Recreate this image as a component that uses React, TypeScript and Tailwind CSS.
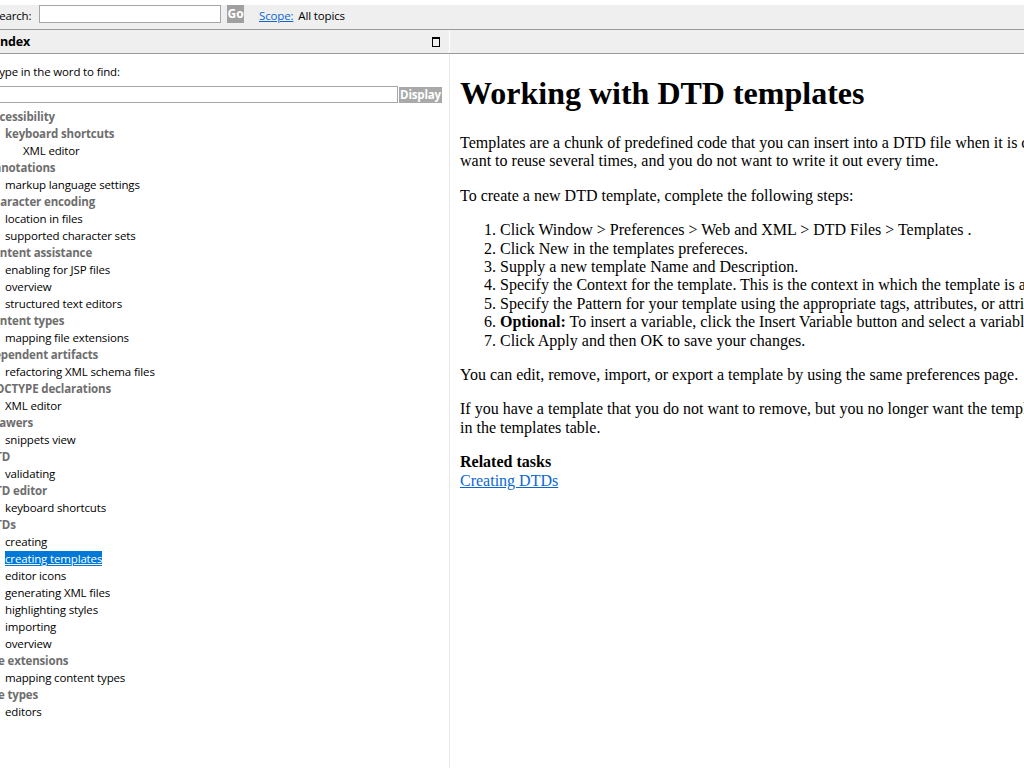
import React from 'react';

type Entry = { label: string; level: 0 | 1 | 2; group?: boolean; selected?: boolean };

// Index entries, top to bottom
const entries: Entry[] = [
  { label: 'accessibility', level: 0, group: true },
  { label: 'keyboard shortcuts', level: 1, group: true },
  { label: 'XML editor', level: 2 },
  { label: 'annotations', level: 0, group: true },
  { label: 'markup language settings', level: 1 },
  { label: 'character encoding', level: 0, group: true },
  { label: 'location in files', level: 1 },
  { label: 'supported character sets', level: 1 },
  { label: 'content assistance', level: 0, group: true },
  { label: 'enabling for JSP files', level: 1 },
  { label: 'overview', level: 1 },
  { label: 'structured text editors', level: 1 },
  { label: 'content types', level: 0, group: true },
  { label: 'mapping file extensions', level: 1 },
  { label: 'dependent artifacts', level: 0, group: true },
  { label: 'refactoring XML schema files', level: 1 },
  { label: 'DOCTYPE declarations', level: 0, group: true },
  { label: 'XML editor', level: 1 },
  { label: 'drawers', level: 0, group: true },
  { label: 'snippets view', level: 1 },
  { label: 'DTD', level: 0, group: true },
  { label: 'validating', level: 1 },
  { label: 'DTD editor', level: 0, group: true },
  { label: 'keyboard shortcuts', level: 1 },
  { label: 'DTDs', level: 0, group: true },
  { label: 'creating', level: 1 },
  { label: 'creating templates', level: 1, selected: true },
  { label: 'editor icons', level: 1 },
  { label: 'generating XML files', level: 1 },
  { label: 'highlighting styles', level: 1 },
  { label: 'importing', level: 1 },
  { label: 'overview', level: 1 },
  { label: 'file extensions', level: 0, group: true },
  { label: 'mapping content types', level: 1 },
  { label: 'file types', level: 0, group: true },
  { label: 'editors', level: 1 },
];

const indent = ['pl-0', 'pl-[18px]', 'pl-[36px]'];

function IndexRow({ e }: { e: Entry }) {
  return (
    <div className={`h-[17px] flex items-center whitespace-nowrap ${indent[e.level]}`}>
      {e.selected ? (
        <span className="bg-[#0078d7] text-white underline leading-[15px]">{e.label}</span>
      ) : (
        <span className={e.group ? 'font-bold text-[#6e6e6e]' : 'text-black'}>{e.label}</span>
      )}
    </div>
  );
}

export default function App() {
  return (
    <div className="w-[1024px] h-[768px] overflow-hidden bg-white flex flex-col font-['Open_Sans',sans-serif] text-[11.5px] tracking-[-0.15px] text-black">
      <div className="h-[5px] shrink-0" />

      {/* Search bar */}
      <div className="h-[25px] shrink-0 bg-[#efefef] border-b border-[#9a9a9a]">
        <div className="h-[18px] flex items-center -ml-[7px]">
          <span className="w-[46px] mt-[4px]">Search:</span>
          <input className="w-[182px] h-[18px] bg-white border border-[#a6a6a6] outline-none" />
          <button className="ml-[6px] w-[17px] h-[18px] bg-[#a0a0a0] text-white font-bold text-[12px] leading-none tracking-normal">Go</button>
          <a href="#" className="ml-[15px] mt-[4px] text-[#0b66d0] underline">Scope:</a>
          <span className="ml-[5px] mt-[4px]">All topics</span>
        </div>
      </div>

      {/* Pane headers */}
      <div className="h-[24px] shrink-0 bg-[#efefef] border-b border-[#9a9a9a] flex">
        <div className="w-[453px] flex items-center justify-between -ml-[4px] pr-[9px]">
          <span className="font-bold text-[12.5px] mt-[1px]">Index</span>
          <svg width="8" height="10" viewBox="0 0 8 10">
            <rect x="0.5" y="0.5" width="7" height="9" fill="none" stroke="black" />
            <rect x="0" y="0" width="8" height="2" fill="black" />
          </svg>
        </div>
        <div className="w-px bg-white" />
        <div className="flex-1" />
      </div>

      <div className="flex-1 flex min-h-0">
        {/* Index pane */}
        <div className="w-[466px] shrink-0 -ml-[16px] border-r border-[#e8e8e8]">
          <div className="pl-[9px] pt-[10px]">
            <div className="h-[16px] leading-[16px]">Type in the word to find:</div>
            <div className="mt-[6px] flex items-center">
              <input className="w-[405px] h-[17px] border border-[#a6a6a6] outline-none" />
              <button className="ml-px w-[43px] h-[16px] bg-[#a9a9a9] text-white font-bold leading-none">Display</button>
            </div>
          </div>
          <div className="mt-[5px] pl-[3px]">
            {entries.map((e, i) => (
              <IndexRow key={i} e={e} />
            ))}
          </div>
        </div>

        {/* Topic pane */}
        <div className="w-[722px] shrink-0 pl-[10px] font-['Liberation_Serif',serif] text-[16px] leading-[18.4px] tracking-normal text-black">
          <h1 className="text-[32px] font-bold leading-[normal] my-[21.44px]">Working with DTD templates</h1>
          <p className="my-[16px]">
            Templates are a chunk of predefined code that you can insert into a DTD file when it is created, for code you want to reuse several times, and you do not want to write it out every time.
          </p>
          <p className="my-[16px]">To create a new DTD template, complete the following steps:</p>
          <ol className="my-[16px] pl-[40px] list-decimal">
            <li>Click Window &gt; Preferences &gt; Web and XML &gt; DTD Files &gt; Templates .</li>
            <li>Click New in the templates prefereces.</li>
            <li>Supply a new template Name and Description.</li>
            <li>Specify the Context for the template. This is the context in which the template is available.</li>
            <li>Specify the Pattern for your template using the appropriate tags, attributes, or attribute values.</li>
            <li>
              <b>Optional:</b> To insert a variable, click the Insert Variable button and select a variable to be inserted.
            </li>
            <li>Click Apply and then OK to save your changes.</li>
          </ol>
          <p className="my-[16px]">You can edit, remove, import, or export a template by using the same preferences page.</p>
          <p className="my-[16px]">
            If you have a template that you do not want to remove, but you no longer want the template to show, disable it in the templates table.
          </p>
          <div className="font-bold">Related tasks</div>
          <a href="#" className="text-[#0b66d0] underline">Creating DTDs</a>
        </div>
      </div>
    </div>
  );
}
